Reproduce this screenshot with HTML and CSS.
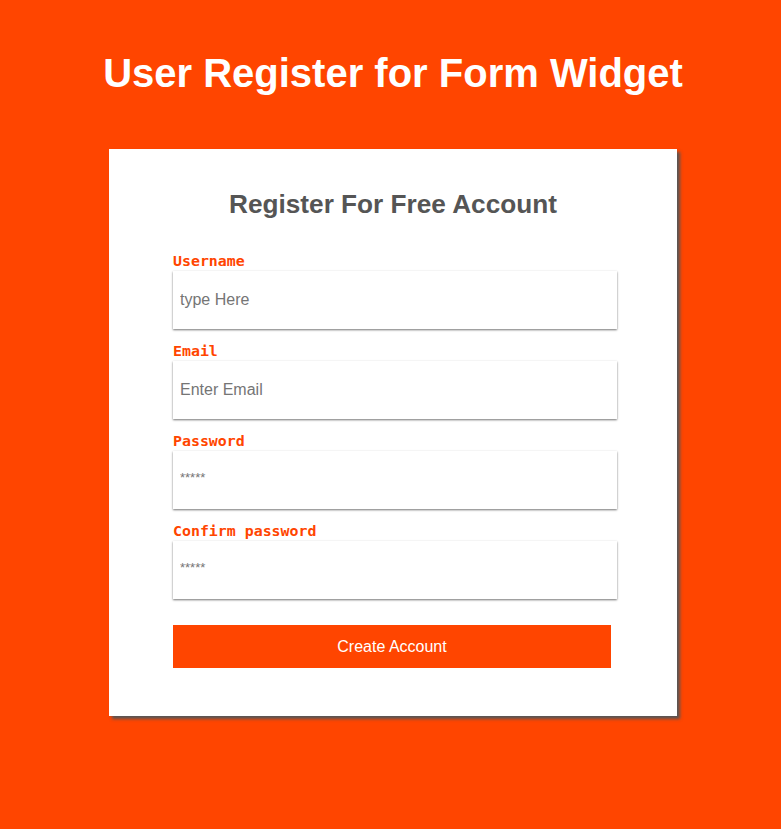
FILE: index.html
```html
<!DOCTYPE html>
<html>
	<head>
		<meta charset="utf-8" />
		<title>User Register</title>
		<link rel="stylesheet" href="styles.css">
	</head>
	<body>
		<h1 class="page-title">User Register for Form Widget</h1>
		<div class="card">
			<h2 class="card-title">Register For Free Account</h2>
			<form class="register-form">
				<label class="field-label" for="username">Username</label>
				<input class="field-input" type="text" id="username" placeholder="type Here">

				<label class="field-label" for="email">Email</label>
				<input class="field-input" type="text" id="email" placeholder="Enter Email">

				<label class="field-label" for="password">Password</label>
				<input class="field-input pass" type="text" id="password" placeholder="*****">

				<label class="field-label" for="confirm">Confirm password</label>
				<input class="field-input pass" type="text" id="confirm" placeholder="*****">

				<button class="submit-btn" type="button">Create Account</button>
			</form>
		</div>
	</body>
</html>
```

FILE: styles.css
```css
html, body {
	margin: 0;
	padding: 0;
}
body {
	background-color: #ff4500;
	font-family: "Liberation Sans", Arial, sans-serif;
	padding-top: 50px;
	padding-bottom: 113px;
}
.page-title {
	margin: 0 0 0 5px;
	text-align: center;
	color: #fff;
	font-size: 40px;
	line-height: 46px;
	font-weight: 700;
}
.card {
	width: 568px;
	height: 567px;
	box-sizing: border-box;
	margin: 53px 0 0 109px;
	background-color: #fff;
	padding: 39px 64px 0 64px;
	box-shadow: 3px 3px 3px #555;
}
.card-title {
	margin: 0;
	text-align: center;
	color: #555;
	font-size: 26.2px;
	line-height: 32px;
	font-weight: 700;
}
.register-form {
	display: flex;
	flex-direction: column;
	margin-top: 31px;
}
.field-label {
	font-family: "DejaVu Sans Mono", "Liberation Mono", monospace;
	font-size: 14.9px;
	font-weight: 700;
	color: #ff4500;
	line-height: 20px;
	height: 20px;
}
.field-input {
	width: 444px;
	height: 58px;
	box-sizing: border-box;
	border: none;
	outline: none;
	padding: 0 7px;
	margin: 0 0 12px 0;
	font-family: "Liberation Sans", Arial, sans-serif;
	font-size: 16px;
	background: #fff;
	box-shadow: 0 1px 2px rgba(0, 0, 0, 0.55);
}
.field-input::placeholder {
	color: #757575;
}
.field-input.pass {
	padding-top: 0;
	padding-bottom: 6px;
}
.field-input.pass::placeholder {
	font-size: 13px;
}
.submit-btn {
	width: 438px;
	height: 43px;
	margin-top: 14px;
	border: none;
	background-color: #ff4500;
	color: #fff;
	font-family: "Liberation Sans", Arial, sans-serif;
	font-size: 16px;
	cursor: pointer;
}
```
